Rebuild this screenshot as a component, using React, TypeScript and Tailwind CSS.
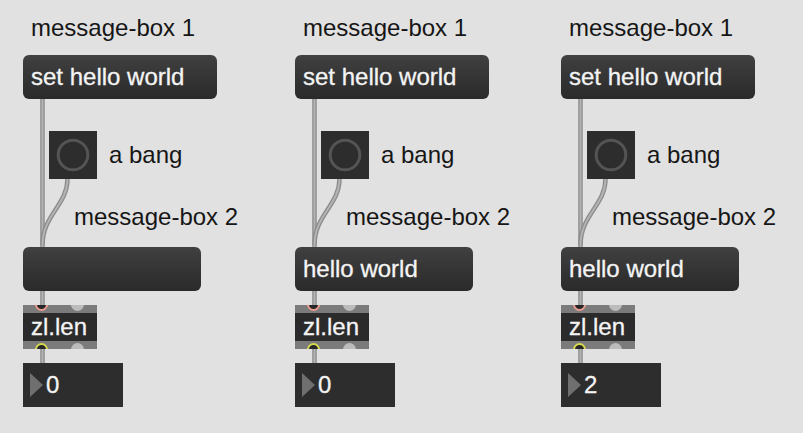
import type { ReactNode } from "react";

interface ColumnProps {
  width: number;
  received: string;
  count: string;
}

const font = { fontFamily: '"Liberation Sans", Arial, sans-serif' };

function Cable({ d }: { d: string }) {
  return (
    <g fill="none" strokeLinecap="butt">
      <path d={d} stroke="#8a8a8a" strokeWidth={4.5} />
      <path d={d} stroke="#b3b3b3" strokeWidth={2} />
    </g>
  );
}

function MessageBox({ width, children }: { width: number; children?: ReactNode }) {
  return (
    <div
      className="h-[44px] rounded-[6px] bg-gradient-to-b from-[#404040] to-[#2a2a2a] flex items-center pl-[8px] text-[24px] leading-none text-[#f4f4f4] [-webkit-text-stroke:0.3px_#f4f4f4] whitespace-nowrap"
      style={{ width }}
    >
      {children}
    </div>
  );
}

function Port({ left, ring, top }: { left: number; ring?: string; top: boolean }) {
  return (
    <span
      className={`absolute w-[13px] h-[13px] rounded-full ${top ? "top-[-7px]" : "bottom-[-7px]"} ${
        ring ? "bg-[#262626] border-2" : "bg-[#bcbcbc]"
      }`}
      style={{ left, borderColor: ring }}
    />
  );
}

function ZlLen() {
  return (
    <div className="w-[74px] h-[44px] flex flex-col">
      <div className="relative h-[8px] bg-[#7b7b7b] overflow-hidden">
        <Port left={12} ring="#e89c8f" top />
        <Port left={48} top />
      </div>
      <div className="h-[28px] bg-[#2b2b2b] flex items-center pl-[8px] text-[24px] leading-none text-[#f4f4f4] [-webkit-text-stroke:0.3px_#f4f4f4]">
        zl.len
      </div>
      <div className="relative h-[8px] bg-[#7b7b7b] overflow-hidden">
        <Port left={12} ring="#d6d84e" top={false} />
        <Port left={48} top={false} />
      </div>
    </div>
  );
}

function NumberBox({ value }: { value: string }) {
  return (
    <div className="w-[100px] h-[44px] bg-[#2d2d2d] flex items-center pl-[7px] gap-[3px] text-[24px] leading-none text-[#f4f4f4] [-webkit-text-stroke:0.3px_#f4f4f4]">
      <svg width="13" height="24" viewBox="0 0 13 24">
        <polygon points="0,0 13,12 0,24" fill="#6f6f6f" />
      </svg>
      <span>{value}</span>
    </div>
  );
}

function PatchColumn({ width, received, count }: ColumnProps) {
  return (
    <div className="relative flex flex-col shrink-0" style={{ width }}>
      <div className="mt-[16px] ml-[8px] h-[24px] text-[24px] leading-none text-[#161616] whitespace-nowrap">
        message-box 1
      </div>
      <div className="mt-[15px]">
        <MessageBox width={194}>set hello world</MessageBox>
      </div>

      <div className="mt-[32px] ml-[26px] flex items-center gap-[12px]">
        <div className="w-[48px] h-[48px] bg-[#2d2d2d] flex items-center justify-center">
          <svg width="34" height="34" viewBox="0 0 34 34">
            <circle cx="17" cy="17" r="14.8" fill="none" stroke="#545454" strokeWidth="3" />
          </svg>
        </div>
        <span className="text-[24px] leading-none text-[#161616] whitespace-nowrap">a bang</span>
      </div>

      <div className="mt-[26px] ml-[51px] h-[24px] text-[24px] leading-none text-[#161616] whitespace-nowrap">
        message-box 2
      </div>
      <div className="mt-[18px]">
        <MessageBox width={178}>{received}</MessageBox>
      </div>

      <div className="mt-[14px]">
        <ZlLen />
      </div>
      <div className="mt-[14px]">
        <NumberBox value={count} />
      </div>

      {/* patch cords */}
      <svg className="absolute left-0 top-0 pointer-events-none" width={width} height={433}>
        <Cable d="M19.5 99 L19.5 247" />
        <Cable d="M44.5 179 C44.5 205, 19.5 215, 19.5 245" />
        <Cable d="M19.5 291 L19.5 305" />
        <Cable d="M19.5 349 L19.5 363" />
      </svg>
    </div>
  );
}

export default function App() {
  return (
    <div className="w-[803px] h-[433px] bg-[#e1e1e1] flex pl-[23px] overflow-hidden" style={font}>
      <PatchColumn width={272} received="" count="0" />
      <PatchColumn width={266} received="hello world" count="0" />
      <PatchColumn width={242} received="hello world" count="2" />
    </div>
  );
}
